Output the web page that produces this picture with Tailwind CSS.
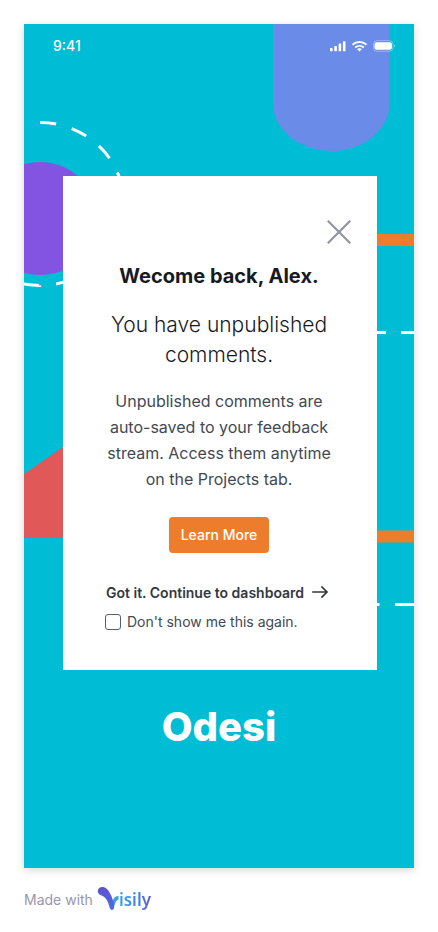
<!DOCTYPE html>
<html lang="en">
<head>
<meta charset="utf-8">
<meta name="viewport" content="width=device-width, initial-scale=1">
<title>Odesi</title>
<script src="https://cdn.jsdelivr.net/npm/@tailwindcss/browser@4"></script>
</head>
<body class="min-h-screen bg-white px-6 pt-6 font-['Inter',sans-serif]">
<main class="relative flex min-h-[844px] flex-col overflow-hidden bg-[#00bdd6] shadow-[0_2px_8px_rgba(0,0,0,0.16)]">
  <svg class="absolute inset-0 h-full w-full" viewBox="0 0 390 844" preserveAspectRatio="xMidYMin slice" fill="none" aria-hidden="true">
    <path d="M249 0H365.500V79C365.500 106 339 127 307.500 127S249 106 249 79Z" fill="#6a8ce8"/>
    <ellipse cx="16" cy="194.500" rx="57" ry="56.500" fill="#8353e2"/>
    <ellipse cx="16" cy="180" rx="81.500" ry="84" pathLength="320" stroke="#fff" stroke-width="3" stroke-dasharray="10 10" transform="rotate(-90 16 180)"/>
    <path d="M0 450L39 423L120 367V514H0Z" fill="#e05858"/>
    <path d="M300 216H390M300 512.500H390" stroke="#ed7d2d" stroke-width="12"/>
    <path d="M350 308.500H362M377 308.500H390M350 580.500H355.500M371 580.500H390" stroke="#fff" stroke-width="3"/>
  </svg>

  <header class="relative flex h-11 items-center justify-between pr-[18px] pl-[29px] text-white">
    <span class="text-sm font-medium">9:41</span>
    <svg class="h-4 w-[68px]" viewBox="0 0 68 16" fill="#fff" role="img" aria-label="Signal, Wi-Fi and battery">
      <rect x="2" y="10" width="2.600" height="3.300" rx=".6"/><rect x="6.300" y="8" width="2.600" height="5.300" rx=".6"/><rect x="10.600" y="5.500" width="2.600" height="7.800" rx=".6"/><rect x="14.900" y="3.200" width="2.600" height="10.100" rx=".6"/>
      <g fill="none" stroke="#fff" stroke-width="1.900"><path d="M24.500 6.700C28.500 3.100 34.500 3.100 38.500 6.700"/><path d="M27.200 9.500C29.700 7.300 33.300 7.300 35.800 9.500"/></g>
      <path d="M29 11Q31.500 9.300 34 11L31.500 13.600Z"/>
      <rect x="45.500" y="2.700" width="19.500" height="10.600" rx="3.500" fill="none" stroke="#fff" stroke-opacity=".35"/>
      <path d="M66 6.500Q68 8 66 9.500Z" fill-opacity=".45"/>
      <rect x="46.500" y="4.200" width="17.500" height="7.600" rx="2.200"/>
    </svg>
  </header>

  <section aria-labelledby="title" class="relative mt-[108px] mr-[37px] ml-[39px] flex flex-col items-center bg-white pt-11 pr-[26px] pb-[37px] pl-6 text-center">
    <button type="button" aria-label="Close" class="self-end text-[#9095a0]">
      <svg class="size-6" viewBox="0 0 24 24" fill="none" stroke="currentColor" stroke-width="2.200" stroke-linecap="square"><path d="M1.500 1.500L22.500 22.500M22.500 1.500L1.500 22.500"/></svg>
    </button>
    <h1 id="title" class="mt-4 text-xl leading-8 font-bold text-[#171a1f]">Wecome back, Alex.</h1>
    <h2 class="mt-[18px] max-w-[240px] text-[21px] leading-[30px] font-light text-[#171a1f]">You have unpublished comments.</h2>
    <p class="mt-[18px] max-w-[240px] text-base leading-[26px] font-normal text-[#424955]">Unpublished comments are auto-saved to your feedback stream. Access them anytime on the Projects tab.</p>
    <button type="button" class="mt-[25px] h-9 rounded bg-[#ed7d2d] px-3 text-sm font-medium text-white">Learn More</button>
    <div class="mt-7 ml-[18px] flex flex-col items-start gap-1.5 self-start">
      <a href="#" class="flex h-6 items-center gap-1.5 pl-px text-sm font-semibold text-[#323842]">Got it. Continue to dashboard
        <svg class="size-5" viewBox="0 0 20 20" fill="none" stroke="currentColor" stroke-width="1.700" stroke-linecap="square" aria-hidden="true"><path d="M3 9H16.500M12 4L17 9L12 14"/></svg>
      </a>
      <label for="hide" class="flex items-center gap-1.5 text-sm leading-[22px] font-normal text-[#424955]">
        <input id="hide" type="checkbox" class="size-4 appearance-none rounded-[3px] border border-[#565e6c] bg-white checked:bg-[#ed7d2d]">Don't show me this again.
      </label>
    </div>
  </section>

  <p class="relative mt-[29px] text-center text-[40px] leading-[56px] font-extrabold text-white">Odesi</p>
</main>

<footer class="mt-4 flex h-8 items-center gap-1 text-sm text-[#9a95b0]">
  <span>Made with</span>
  <a href="#" class="flex items-center">
    <svg class="h-7 w-[22px]" viewBox="0 0 22 28" aria-hidden="true">
      <defs><linearGradient id="stem" x1="0" y1="0" x2="0" y2="1"><stop stop-color="#5f50d0"/><stop offset="1" stop-color="#4a6fe4"/></linearGradient></defs>
      <path d="M14 23C15 16 16 10 21.500 10V13.500C18.500 14.500 18 18 16.500 23Z" fill="#3f9de8"/>
      <path d="M.8 5C1 2 3.500 .5 6.500 1C11 2 14.500 9 16.500 16C17.500 20 17.300 24 15 24C12.500 24 12.500 20 11 16.500C9.500 12.500 7 10.500 4 9.300C1.800 8.400.8 7 .8 5Z" fill="url(#stem)"/>
    </svg>
    <span class="bg-gradient-to-r from-[#38a1e8] via-[#4186e8] to-[#5a5ddc] bg-clip-text font-['Noto_Sans',sans-serif] text-[17px] leading-7 font-semibold text-transparent">isily</span>
  </a>
</footer>
</body>
</html>
